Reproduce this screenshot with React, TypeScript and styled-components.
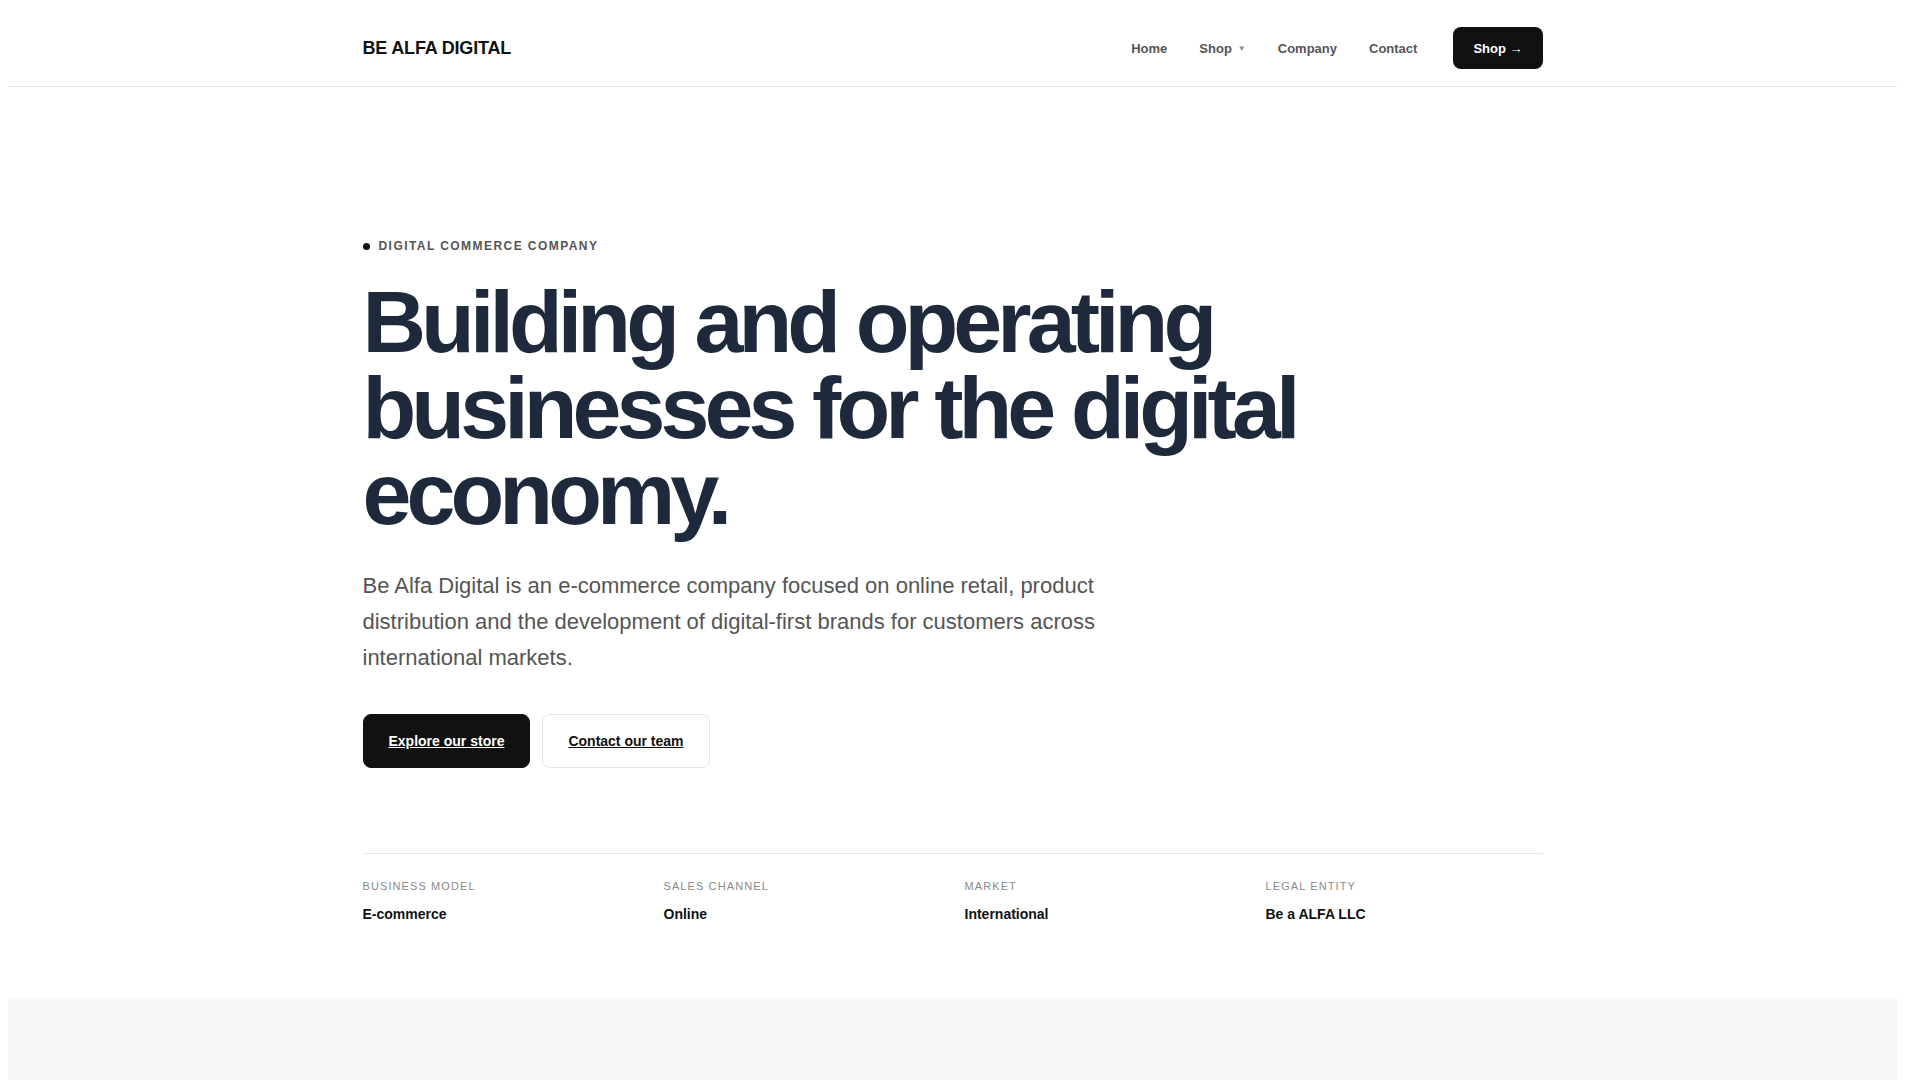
import React from "react";
import { styled, createGlobalStyle } from "styled-components";

// the reference was taken with a 15px scrollbar on the right; the extra
// right margin keeps the same usable width
const GlobalStyle = createGlobalStyle`
  * {
    box-sizing: border-box;
  }

  body {
    margin: 8px 23px 8px 8px;
    background: #ffffff;
    color: #111111;
    font-family: "Liberation Sans", Arial, Helvetica, sans-serif;
  }
`;

const Container = styled.div`
  width: 100%;
  max-width: 1180px;
  margin: 0 auto;
`;

/* header */

const StyledHeader = styled.header`
  border-bottom: 1px solid #e8e8e8;
`;

const HeaderInner = styled(Container)`
  display: flex;
  align-items: center;
  justify-content: space-between;
  padding: 19px 0 17px;
`;

const Logo = styled.a`
  font-size: 18px;
  font-weight: 700;
  letter-spacing: -0.01em;
  color: #111111;
  text-decoration: none;
`;

const NavArea = styled.div`
  display: flex;
  align-items: center;
  gap: 36px;
`;

const NavList = styled.nav`
  display: flex;
  align-items: center;
  gap: 32px;
`;

const NavLink = styled.a`
  display: inline-flex;
  align-items: center;
  gap: 6px;
  font-size: 13px;
  font-weight: 600;
  color: #555555;
  text-decoration: none;
`;

const Caret = styled.span`
  font-size: 8px;
  color: #8a8a8a;
`;

const HeaderButton = styled.a`
  display: inline-flex;
  align-items: center;
  height: 42px;
  padding: 0 20px;
  border-radius: 8px;
  background: #111111;
  color: #ffffff;
  font-size: 13px;
  font-weight: 700;
  text-decoration: none;
`;

/* hero */

const Hero = styled.section`
  padding: 150px 0 73px;
`;

const Eyebrow = styled.div`
  display: flex;
  align-items: center;
  gap: 9px;
  font-size: 12px;
  line-height: 18px;
  font-weight: 700;
  letter-spacing: 0.12em;
  text-transform: uppercase;
  color: #555555;
`;

const Dot = styled.span`
  width: 7px;
  height: 7px;
  border-radius: 50%;
  background: #111111;
`;

const Title = styled.h1`
  max-width: 980px;
  margin: 24px 0 0;
  font-size: 88px;
  line-height: 0.98;
  font-weight: 700;
  letter-spacing: -0.056em;
  color: #1e293b;
`;

const Lead = styled.p`
  max-width: 760px;
  margin: 30px 0 0;
  font-size: 22px;
  line-height: 1.65;
  color: #555555;
`;

const Actions = styled.div`
  display: flex;
  gap: 12px;
  margin-top: 37px;
`;

const ActionButton = styled.a<{ $primary?: boolean }>`
  display: inline-flex;
  align-items: center;
  height: 54px;
  padding: 0 25px;
  border-radius: 8px;
  border: 1px solid ${({ $primary }) => ($primary ? "#111111" : "#e5e5e5")};
  background: ${({ $primary }) => ($primary ? "#111111" : "#ffffff")};
  color: ${({ $primary }) => ($primary ? "#ffffff" : "#111111")};
  font-size: 14px;
  font-weight: 700;
  text-decoration: underline;
`;

const Facts = styled.dl`
  display: grid;
  grid-template-columns: repeat(4, 1fr);
  gap: 24px;
  margin: 85px 0 0;
  padding-top: 24px;
  border-top: 1px solid #e8e8e8;
`;

const Fact = styled.div`
  display: flex;
  flex-direction: column;
  gap: 10px;
`;

const FactLabel = styled.dt`
  font-size: 11px;
  line-height: 1.5;
  letter-spacing: 0.1em;
  text-transform: uppercase;
  color: #8a8a8a;
`;

const FactValue = styled.dd`
  margin: 0;
  font-size: 14px;
  line-height: 1.5;
  font-weight: 700;
  color: #111111;
`;

/* lower sections (below the fold) */

const Band = styled.section<{ $tone?: "grey" | "white" | "dark" }>`
  min-height: 1050px;
  padding: 120px 0;
  background: ${({ $tone }) =>
    $tone === "grey" ? "#f7f7f7" : $tone === "dark" ? "#111111" : "#ffffff"};
  color: ${({ $tone }) => ($tone === "dark" ? "#ffffff" : "#111111")};
`;

const BandTitle = styled.h2`
  margin: 0 0 48px;
  font-size: 48px;
  letter-spacing: -0.04em;
  color: inherit;
`;

const CardGrid = styled.div`
  display: grid;
  grid-template-columns: repeat(3, 1fr);
  gap: 24px;
`;

const Card = styled.div`
  min-height: 260px;
  padding: 32px;
  border: 1px solid #e5e5e5;
  border-radius: 12px;
  background: #ffffff;
  color: #111111;
  font-size: 16px;
  line-height: 1.6;
`;

const navItems = ["Home", "Shop", "Company", "Contact"];

const facts = [
  { label: "Business model", value: "E-commerce" },
  { label: "Sales channel", value: "Online" },
  { label: "Market", value: "International" },
  { label: "Legal entity", value: "Be a ALFA LLC" },
];

const bands = [
  {
    tone: "grey" as const,
    title: "What we do",
    cards: ["Online retail", "Product distribution", "Digital-first brands"],
  },
  {
    tone: "white" as const,
    title: "Our approach",
    cards: ["Customer focus", "Operational excellence", "Long-term thinking"],
  },
  {
    tone: "grey" as const,
    title: "Markets",
    cards: ["Europe", "North America", "Asia"],
  },
  {
    tone: "white" as const,
    title: "Company",
    cards: ["Be a ALFA LLC", "Team", "Partners"],
  },
  {
    tone: "grey" as const,
    title: "Contact",
    cards: ["General enquiries", "Partnerships", "Press"],
  },
  {
    tone: "dark" as const,
    title: "Be Alfa Digital",
    cards: ["Home", "Shop", "Company"],
  },
];

const App: React.FC = () => {
  return (
    <>
      <GlobalStyle />
      <StyledHeader>
        <HeaderInner>
          <Logo href="#">BE ALFA DIGITAL</Logo>
          <NavArea>
            <NavList>
              {navItems.map((item) => (
                <NavLink key={item} href="#">
                  {item}
                  {item === "Shop" && <Caret>▼</Caret>}
                </NavLink>
              ))}
            </NavList>
            <HeaderButton href="#">Shop →</HeaderButton>
          </NavArea>
        </HeaderInner>
      </StyledHeader>

      <Hero>
        <Container>
          <Eyebrow>
            <Dot />
            Digital commerce company
          </Eyebrow>
          <Title>Building and operating businesses for the digital economy.</Title>
          <Lead>
            Be Alfa Digital is an e-commerce company focused on online retail,
            product distribution and the development of digital-first brands for
            customers across international markets.
          </Lead>
          <Actions>
            <ActionButton $primary href="#">
              Explore our store
            </ActionButton>
            <ActionButton href="#">Contact our team</ActionButton>
          </Actions>
          <Facts>
            {facts.map((fact) => (
              <Fact key={fact.label}>
                <FactLabel>{fact.label}</FactLabel>
                <FactValue>{fact.value}</FactValue>
              </Fact>
            ))}
          </Facts>
        </Container>
      </Hero>

      {bands.map((band) => (
        <Band key={band.title} $tone={band.tone}>
          <Container>
            <BandTitle>{band.title}</BandTitle>
            <CardGrid>
              {band.cards.map((card) => (
                <Card key={card}>{card}</Card>
              ))}
            </CardGrid>
          </Container>
        </Band>
      ))}
    </>
  );
};

export default App;
